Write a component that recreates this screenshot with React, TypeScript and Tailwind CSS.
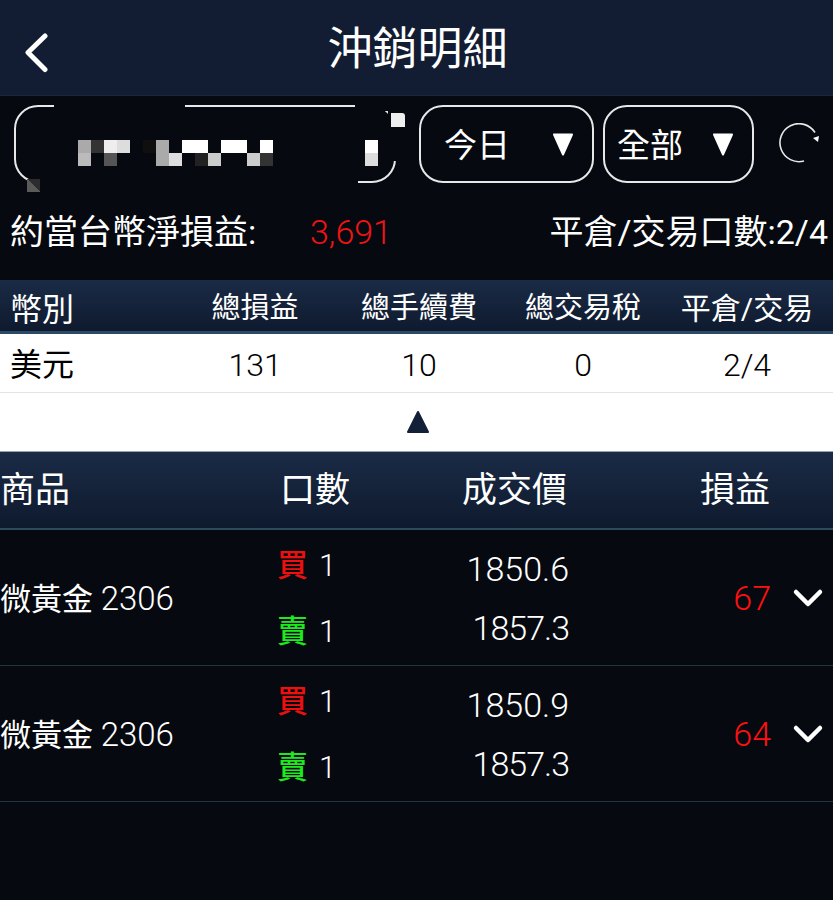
const font = { fontFamily: '"Roboto", "Noto Sans CJK TC", sans-serif' };

const pixelRows = [
  ["bg-[#aaaaaa]", "bg-[#333333]", "bg-[#eeeeee]", "bg-[#dddddd]", "", "bg-[#0f0f10]", "bg-[#aaaaaa]", "", "bg-white", "bg-white", "", "bg-white", "bg-white", "", "bg-white"],
  ["bg-[#bbbbbb]", "", "bg-[#555555]", "", "", "", "bg-[#aaaaaa]", "bg-[#dddddd]", "", "bg-[#222222]", "bg-[#cccccc]", "", "", "bg-[#cccccc]", "bg-[#333333]"],
];

const summaryCols = ["美元", "131", "10", "0", "2/4"];
const summaryHead = ["幣別", "總損益", "總手續費", "總交易稅", "平倉/交易"];

const trades = [
  { buy: "1850.6", sell: "1857.3", pnl: "67" },
  { buy: "1850.9", sell: "1857.3", pnl: "64" },
];

function Caret() {
  return (
    <svg width="22" height="24" viewBox="0 0 22 24">
      <path d="M2 2.5h18L11 22.5z" fill="#fff" stroke="#fff" strokeWidth="2" strokeLinejoin="round" />
    </svg>
  );
}

function Select({ label, w, pl, gap }: { label: string; w: string; pl: string; gap: string }) {
  return (
    <div className={`flex h-[78px] items-center rounded-[24px] border-2 border-[#e8e8e8] ${w} ${pl} ${gap}`}>
      <span className="pt-[3px] text-[33px] leading-none text-white">{label}</span>
      <Caret />
    </div>
  );
}

function TradeRow({ buy, sell, pnl }: { buy: string; sell: string; pnl: string }) {
  return (
    <div className="flex h-[136px] items-center border-b border-[#253240] pt-[2px] text-white">
      <div className="w-[277px] shrink-0 text-[31px]">
        微黃金 <span className="text-[33px] font-light">2306</span>
      </div>
      <div className="flex w-[80px] shrink-0 flex-col gap-[22px]">
        <div className="flex h-[44px] items-center gap-[11px] text-[31px] leading-none">
          <span className="font-medium text-[#ee0f0f]">買</span>
          <span className="font-light">1</span>
        </div>
        <div className="flex h-[44px] items-center gap-[11px] text-[31px] leading-none">
          <span className="font-medium text-[#1fe81f]">賣</span>
          <span className="font-light">1</span>
        </div>
      </div>
      <div className="flex w-[212px] shrink-0 flex-col items-end gap-[15px] text-[34px] leading-[44px] font-light">
        <span>{buy}</span>
        <span className="tracking-[-1px]">{sell}</span>
      </div>
      <div className="w-[202px] shrink-0 text-right text-[34px] font-light text-[#ff1010]">{pnl}</div>
      <svg className="ml-[21px]" width="32" height="22" viewBox="0 0 32 22">
        <path d="M4 4l12 12L28 4" fill="none" stroke="#fff" strokeWidth="4.5" strokeLinecap="round" strokeLinejoin="round" />
      </svg>
    </div>
  );
}

export default function App() {
  return (
    <div className="h-[900px] w-[833px] overflow-hidden bg-[#060910]" style={font}>
      <header className="relative flex h-[96px] items-center justify-center border-b border-[#1c2738] bg-[#121d33] pt-[4px] pl-[2px]">
        <svg className="absolute left-[22px] top-[33px]" width="28" height="40" viewBox="0 0 28 40">
          <path d="M23 3L6 19.5 23 36.5" fill="none" stroke="#fff" strokeWidth="5" strokeLinecap="round" strokeLinejoin="round" />
        </svg>
        <h1 className="text-[45px] text-white">沖銷明細</h1>
      </header>

      <div className="flex items-center pl-[14px] pt-[9px]">
        <div className="relative h-[78px] w-[382px] rounded-[24px] border-2 border-[#e8e8e8]">
          {/* masked account number */}
          <div className="absolute left-[38px] top-[-4px] h-[8px] w-[131px] bg-[#060910]" />
          <div className="absolute left-[339px] top-[-4px] h-[8px] w-[45px] bg-[#060910]" />
          <div className="absolute -right-[2px] top-[4px] h-[50px] w-[8px] bg-[#060910]" />
          <div className="absolute bottom-[-4px] left-[22px] h-[8px] w-[320px] bg-[#060910]" />
          <div className="absolute right-[-11px] top-[6px] h-[14px] w-[14px] rounded-tr-[3px] bg-[#eeeeee]" />
          <div className="absolute bottom-[-11px] left-[11px] h-[13px] w-[13px] bg-[linear-gradient(45deg,#5a5a5a_50%,#2c2c2c_50%)]" />
          <div className="absolute left-[62px] top-[33px] flex flex-col">
            {pixelRows.map((row, i) => (
              <div key={i} className="flex">
                {row.map((c, j) => (
                  <div key={j} className={`h-[13px] w-[13px] ${c}`} />
                ))}
              </div>
            ))}
          </div>
          <div className="absolute left-[349px] top-[33px] flex flex-col">
            <div className="h-[13px] w-[13px] bg-white" />
            <div className="h-[13px] w-[13px] bg-[#dddddd]" />
          </div>
        </div>
        <div className="ml-[23px]">
          <Select label="今日" w="w-[175px]" pl="pl-[23px]" gap="gap-[42px]" />
        </div>
        <div className="ml-[9px]">
          <Select label="全部" w="w-[151px]" pl="pl-[12px]" gap="gap-[29px]" />
        </div>
        <svg className="ml-[25px]" width="42" height="42" viewBox="0 0 42 42">
          <path d="M25 38A19 19 0 1 1 36 9.5" fill="none" stroke="#e8e8e8" strokeWidth="1.6" />
          <path d="M34 15l6-2-1 6z" fill="#fff" />
        </svg>
      </div>

      <div className="flex h-[97px] items-center justify-between pt-[2px] pl-[10px] pr-[5px] text-[34px] text-white">
        <div className="flex items-center">
          <span className="w-[300px]">約當台幣淨損益:</span>
          <span className="font-light text-[#f01414]">3,691</span>
        </div>
        <span>平倉/交易口數:2/4</span>
      </div>

      <div className="grid h-[54px] grid-cols-[173px_164px_164px_164px_164px] items-center border-b-[3px] border-[#2c4a63] bg-gradient-to-b from-[#1b2b46] to-[#0e1a2e] pt-[3px] text-center text-[29px] text-white">
        {summaryHead.map((h, i) => (
          <span key={h} className={i === 0 ? "pl-[10px] pt-[3px] text-left text-[32px]" : i === 4 ? "text-[30px]" : ""}>
            {h}
          </span>
        ))}
      </div>
      <div className="grid h-[59px] grid-cols-[173px_164px_164px_164px_164px] items-center border-b border-[#e4e4e4] bg-white pt-[3px] text-center text-[32px] text-black">
        {summaryCols.map((c, i) => (
          <span key={c} className={i === 0 ? "pl-[10px] text-left" : "font-light"}>
            {c}
          </span>
        ))}
      </div>
      <div className="flex h-[59px] items-center justify-center border-b border-[#9aa3ad] bg-white pl-[2px]">
        <svg width="24" height="24" viewBox="0 0 24 24">
          <path d="M12 2L22 22H2z" fill="#122038" stroke="#122038" strokeWidth="2" strokeLinejoin="round" />
        </svg>
      </div>

      <div className="flex h-[78px] items-center border-b-2 border-[#2c4a5e] bg-gradient-to-b from-[#1b2b46] to-[#0e1a2e] pt-[3px] text-[35px] text-white">
        <span className="w-[280px]">商品</span>
        <span className="w-[182px]">口數</span>
        <span className="w-[238px]">成交價</span>
        <span>損益</span>
      </div>

      {trades.map((t, i) => (
        <TradeRow key={i} {...t} />
      ))}
    </div>
  );
}
